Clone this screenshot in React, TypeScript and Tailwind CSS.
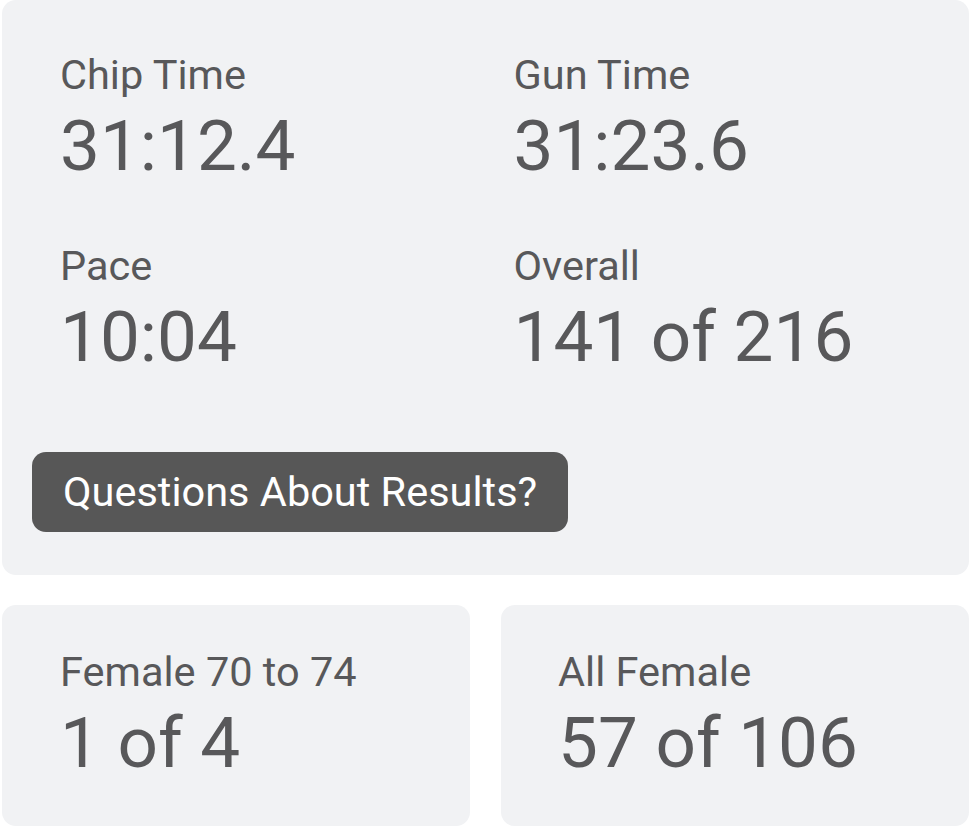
import React from "react";

const font = { fontFamily: "Roboto, 'Noto Sans', Arial, sans-serif" };

function Stat({ label, value }: { label: string; value: string }) {
  return (
    <div className="flex flex-col gap-[11px]">
      <div className="text-[41.5px] leading-[48px] text-[#58585a]">{label}</div>
      <div className="text-[71px] leading-[72px] text-[#58585a]">{value}</div>
    </div>
  );
}

export default function App() {
  return (
    <div className="w-[970px] bg-white pl-[2px] pr-[1px]" style={font}>
      <div className="rounded-[14px] bg-[#f1f2f4] px-[30px] pt-[51px] pb-[43px]">
        <div className="grid grid-cols-2 gap-y-[60px]">
          <div className="px-[28px]">
            <Stat label="Chip Time" value="31:12.4" />
          </div>
          <div className="px-[28px]">
            <Stat label="Gun Time" value="31:23.6" />
          </div>
          <div className="px-[28px]">
            <Stat label="Pace" value="10:04" />
          </div>
          <div className="px-[28px]">
            <Stat label="Overall" value="141 of 216" />
          </div>
        </div>
        <div className="mt-[79px]">
          <button className="h-[80px] rounded-[14px] bg-[#575757] px-[31px] text-[41.5px] leading-[48px] text-white">
            Questions About Results?
          </button>
        </div>
      </div>
      <div className="mt-[30px] grid grid-cols-2 gap-[31px]">
        <div className="h-[221px] rounded-[14px] bg-[#f1f2f4] px-[58px] pt-[43px]">
          <Stat label="Female 70 to 74" value="1 of 4" />
        </div>
        <div className="h-[221px] rounded-[14px] bg-[#f1f2f4] px-[57px] pt-[43px]">
          <Stat label="All Female" value="57 of 106" />
        </div>
      </div>
    </div>
  );
}
